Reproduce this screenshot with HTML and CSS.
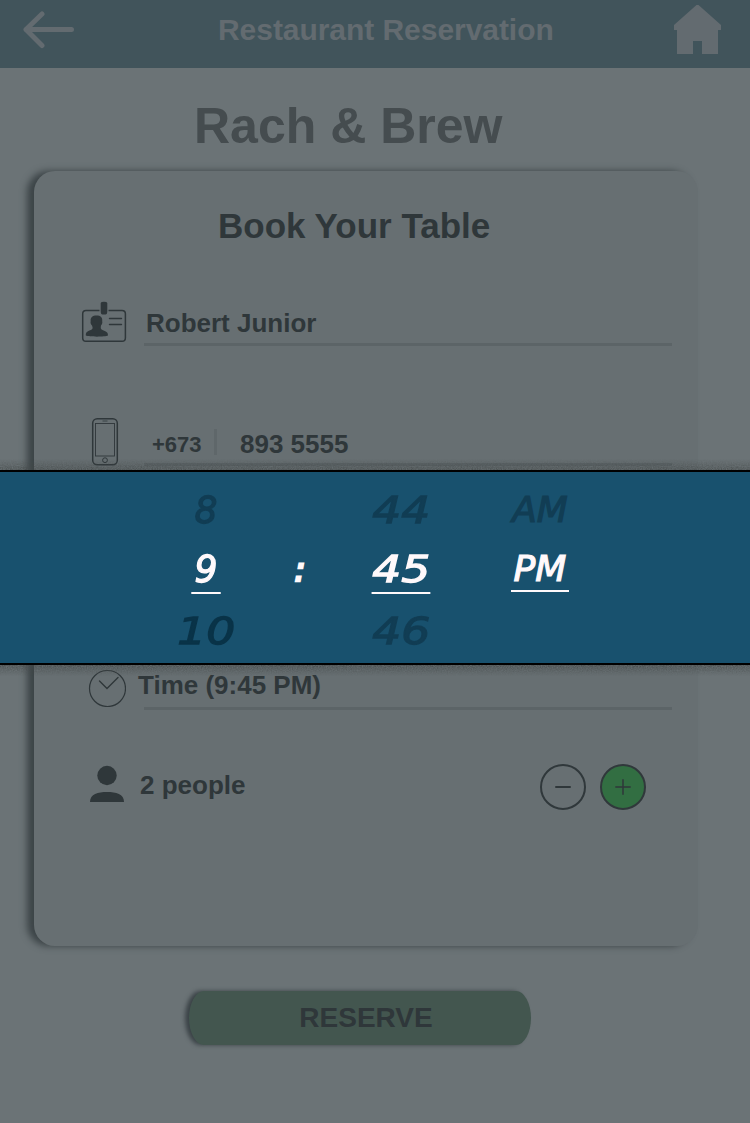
FILE: index.html
```html
<!DOCTYPE html>
<html lang="en">
<head>
<meta charset="utf-8">
<title>Restaurant Reservation</title>
<link rel="stylesheet" href="styles.css">
</head>
<body>
<header class="topbar">
  <svg class="back" width="52" height="38" viewBox="0 0 52 38"><path d="M19 3L3 18.500L19 34.500M3 18.500H48.500" fill="none" stroke="currentColor" stroke-width="5" stroke-linecap="round" stroke-linejoin="round"/></svg>
  <h1 class="topbar-title">Restaurant Reservation</h1>
  <svg class="home" width="48" height="50" viewBox="0 0 48 50"><path d="M22.500 0H24.500L47 20V25H44V49H28V36H19V49H3V25H0V20Z" fill="currentColor"/></svg>
</header>
<main class="content">
  <h2 class="brand">Rach &amp; Brew</h2>
  <section class="card">
    <h3 class="card-title">Book Your Table</h3>
    <div class="row row-name">
      <svg class="icon-id" width="46" height="42" viewBox="0 0 46 42"><path d="M18.500 9.500H5Q1.700 9.500 1.700 12.800V37Q1.700 40.300 5 40.300H41Q44.400 40.300 44.400 37V12.800Q44.400 9.500 41 9.500H27.500" fill="none" stroke="currentColor" stroke-width="1.500"/><path d="M19.700 2Q20 .8 23 .8T26.300 2V10Q26.300 13.500 24.500 13.500H21.500Q19.700 13.500 19.700 10ZM15.500 14.500C19.500 14.500 21.800 16.500 21.200 20C21.700 22 20.800 23.500 20 24.500C19.500 27 19.500 28.500 22 29.300C25.500 30.500 27 31.500 27 34.500C24 36 8 36 4.800 34.500C4.800 31.500 5.800 30.500 9 29.300C12 28.500 12 27 11 24.500C10 23.500 9.200 22 9.700 20C9.200 16.500 11.500 14.500 15.500 14.500Z" fill="currentColor"/><path d="M28.500 17.500H40.500M28.500 23.500H40.500" stroke="currentColor" stroke-width="1.400" stroke-linecap="round"/></svg>
      <span class="field name">Robert Junior</span>
    </div>
    <div class="row row-phone">
      <svg class="icon-phone" width="28" height="49" viewBox="0 0 28 49"><g fill="none" stroke="currentColor"><rect x="1.700" y="1.700" width="24.600" height="46" rx="4.500" stroke-width="1.500"/><rect x="4.500" y="6.500" width="19" height="32.500" stroke-width=".9"/><circle cx="14" cy="43.200" r="2.400"/><path d="M11.500 4H16.500" stroke-width=".8"/></g></svg>
      <span class="field phone"><span class="code">+673</span><span>893 5555</span></span>
    </div>
    <div class="row row-time">
      <svg class="icon-clock" width="38" height="38" viewBox="0 0 38 38"><g fill="none" stroke="currentColor"><circle cx="19.500" cy="19.500" r="18" stroke-width="1.200"/><path d="M11.500 12L19 19.500L30 8.500" stroke-width="1.400" stroke-linecap="round"/></g></svg>
      <span class="field time">Time (9:45 PM)</span>
    </div>
    <div class="row row-people">
      <svg class="icon-person" width="34" height="38" viewBox="0 0 34 38"><circle cx="17" cy="10.500" r="9.700" fill="currentColor"/><path d="M0 37C0 29 8 27 17 27S34 29 34 37Z" fill="currentColor"/></svg>
      <span class="people">2 people</span>
      <button class="round" aria-label="Fewer people"><svg width="20" height="20" viewBox="0 0 20 20"><path d="M3 10H17" stroke="currentColor" stroke-width="2" stroke-linecap="round"/></svg></button>
      <button class="round plus" aria-label="More people"><svg width="20" height="20" viewBox="0 0 20 20"><path d="M2.800 10H17.200M10 2.800V17.200" stroke="currentColor" stroke-width="1.500" stroke-linecap="round"/></svg></button>
    </div>
  </section>
  <button class="reserve">RESERVE</button>
</main>
<div class="picker">
  <svg class="grain" width="750" height="217" aria-hidden="true">
    <defs>
      <filter id="speckle" x="0" y="0" width="100%" height="100%" color-interpolation-filters="sRGB"><feTurbulence type="fractalNoise" baseFrequency=".8" numOctaves="2" seed="4" result="n"/><feColorMatrix in="n" type="matrix" values="0 0 0 0 .26 0 0 0 0 .28 0 0 0 0 .28 1.200 0 0 0 -.1" result="d"/><feComposite in="d" in2="SourceGraphic" operator="in"/></filter>
      <linearGradient id="above" x1="0" y1="0" x2="0" y2="1"><stop offset="0" stop-opacity="0"/><stop offset="1" stop-opacity=".9"/></linearGradient>
      <linearGradient id="below" x1="0" y1="1" x2="0" y2="0"><stop offset="0" stop-opacity="0"/><stop offset="1"/></linearGradient>
    </defs>
    <rect width="750" height="11" fill="url(#above)" filter="url(#speckle)"/>
    <rect y="206" width="750" height="11" fill="url(#below)" filter="url(#speckle)"/>
  </svg>
  <div class="wheel hours"><span class="digit one">8</span><span class="digit one active">9</span><span class="digit deep">10</span></div>
  <div class="colon">:</div>
  <div class="wheel minutes"><span class="digit">44</span><span class="digit active">45</span><span class="digit">46</span></div>
  <div class="wheel meridiem"><span class="digit half">AM</span><span class="digit half active">PM</span></div>
</div>
</body>
</html>
```

FILE: styles.css
```css
* { box-sizing: border-box; }
body {
  margin: 0;
  position: relative;
  height: 1123px;
  overflow: hidden;
  background: #6b7376;
  color: #2f373a;
  font-family: "Liberation Sans", Arial, sans-serif;
  font-weight: 700;
}
h1, h2, h3 { margin: 0; }
svg { display: block; flex: none; }
button { font: inherit; color: inherit; padding: 0; border: 0; }
.topbar {
  height: 68px;
  display: flex;
  align-items: flex-start;
  padding: 0 28px 0 23px;
  background: #41545b;
  color: #636b70;
}
.back { margin-top: 11px; }
.topbar-title { flex: 1; margin: 13px 0 0 143px; font-size: 30px; line-height: 34px; letter-spacing: -0.05px; }
.home { margin-top: 5px; }
.content { display: flex; flex-direction: column; align-items: flex-start; }
.brand {
  margin: 30px 0 0 194px;
  font-size: 50px;
  line-height: 56px;
  color: #454c4f;
}
.card {
  width: 664px;
  height: 775px;
  margin: 17px 0 0 34px;
  border-radius: 21px;
  background: #676f72;
  box-shadow: -7px 0 7px #3c4447;
}
.card-title { padding: 34px 0 0 184px; font-size: 35px; line-height: 42px; }
.row { display: flex; align-items: flex-start; font-size: 26px; line-height: 30px; }
.row-name { padding: 54px 26px 0 47px; }
.field { flex: 1; border-bottom: 3px solid #5c6467; }
.name { margin-left: 17px; height: 45px; padding: 7px 0 0 2px; }
.row-phone { padding: 71px 26px 0 57px; }
.phone { display: flex; gap: 23px; margin-left: 25px; height: 49px; padding: 12px 0 0 8px; }
.code { font-size: 22px; width: 65px; height: 26px; line-height: 31px; border-right: 3px solid #5f676a; }
.row-time { padding: 203px 26px 0 54px; }
.time { margin-left: 18px; height: 41px; padding-top: 1px; text-indent: -6px; }
.row-people { align-items: center; padding: 54px 52px 0 56px; }
.icon-person { margin-bottom: 6px; }
.people { flex: 1; padding: 0 0 4px 16px; }
.round {
  width: 46px;
  height: 46px;
  margin-left: 14px;
  display: grid;
  place-items: center;
  border: 2px solid #30383b;
  border-radius: 50%;
  background: none;
}
.plus { background: #326e42; }
.reserve {
  width: 342px;
  height: 54px;
  margin: 45px 0 0 189px;
  padding: 0 0 0 12px;
  border-radius: 15px / 27px;
  background: #43564f;
  box-shadow: -4px 0 4px #3b4347;
  font-size: 28px;
}
.picker {
  position: absolute;
  top: 470px;
  left: 0;
  width: 750px;
  height: 195px;
  display: grid;
  grid-template-columns: 178px 57px 130px 73px 73px 65px;
  border: solid #000;
  border-width: 2px 0;
  background: #18516e;
  color: #113d54;
  font: oblique 400 38px/60px "DejaVu Sans", sans-serif;
}
.grain { position: absolute; top: -13px; left: 0; pointer-events: none; }
.wheel { display: grid; grid-template-rows: 59px 62px 61px; padding-top: 8px; justify-items: center; }
.hours { grid-column: 2; }
.minutes { grid-column: 4; justify-self: center; width: 60px; }
.meridiem { grid-column: 6; width: 58px; }
.digit { transform: scaleX(1.2); -webkit-text-stroke: 1.3px currentColor; }
.one { transform: scaleX(0.95); }
.half { font-size: 36px; transform: scaleX(1); -webkit-text-stroke-width: 1.2px; }
.deep { color: #093348; }
.active { position: relative; color: #fff9fb; }
.active::after {
  content: "";
  position: absolute;
  left: 50%;
  bottom: 7px;
  width: 49px;
  height: 2px;
  transform: translateX(-50%);
  background: #fff9fb;
}
.one.active::after { width: 31px; }
.half.active::after { width: 58px; bottom: 9px; }
.colon {
  grid-column: 3;
  padding-top: 67px;
  text-align: center;
  color: #fff9fb;
  font-size: 34px;
  -webkit-text-stroke: 2.4px currentColor;
}
```
